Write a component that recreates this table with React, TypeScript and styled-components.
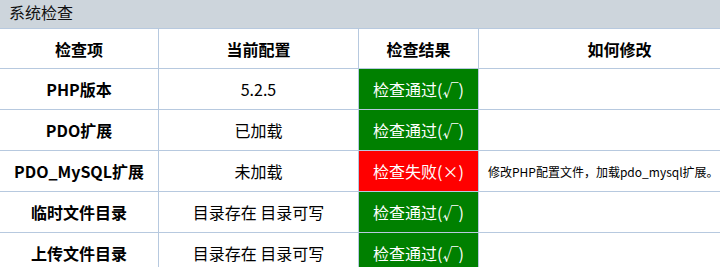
import React from "react";
import styled, {createGlobalStyle, css} from "styled-components";

const GlobalStyle = createGlobalStyle`
  html, body {
    margin: 0;
    padding: 0;
    background: #fff;
    overflow: hidden;
  }
  body {
    font-family: "Noto Sans CJK SC", "Liberation Sans", sans-serif;
    color: #000;
  }
`;

type Status = "pass" | "fail";

const rows: { item: string, current: string, status: Status, fix: string }[] = [
    {item: "PHP版本", current: "5.2.5", status: "pass", fix: ""},
    {item: "PDO扩展", current: "已加载", status: "pass", fix: ""},
    {item: "PDO_MySQL扩展", current: "未加载", status: "fail", fix: "修改PHP配置文件，加载pdo_mysql扩展。"},
    {item: "临时文件目录", current: "目录存在 目录可写", status: "pass", fix: ""},
    {item: "上传文件目录", current: "目录存在 目录可写", status: "pass", fix: ""},
];

export default function App() {
    return (
        <>
            <GlobalStyle/>
            <Panel>
                <TitleBar>系统检查</TitleBar>
                <Table>
                    <colgroup>
                        <col style={{width: 159}}/>
                        <col style={{width: 200}}/>
                        <col style={{width: 120}}/>
                        <col/>
                    </colgroup>
                    <thead>
                    <tr>
                        <HeadCell>检查项</HeadCell>
                        <HeadCell>当前配置</HeadCell>
                        <HeadCell>检查结果</HeadCell>
                        <HeadCell>如何修改</HeadCell>
                    </tr>
                    </thead>
                    <tbody>
                    {rows.map((r) => (
                        <tr key={r.item}>
                            <ItemCell>{r.item}</ItemCell>
                            <ValueCell>{r.current}</ValueCell>
                            <ResultCell status={r.status}>
                                {r.status === "pass" ? "检查通过(√)" : "检查失败(×)"}
                            </ResultCell>
                            <FixCell>{r.fix}</FixCell>
                        </tr>
                    ))}
                    </tbody>
                </Table>
            </Panel>
        </>
    );
}

const Panel = styled.div`
  width: 720px;
  height: 267px;
  overflow: hidden;
`;

const TitleBar = styled.div`
  height: 28px;
  line-height: 24px;
  padding-left: 9px;
  background: #cdd5dc;
  font-size: 16px;
  color: #111;
`;

const Table = styled.table`
  border-collapse: collapse;
  table-layout: fixed;
  width: 762px;
  margin-left: -1px;
`;

const cellBase = css`
  border: 1px solid #b7c9df;
  height: 40px;
  padding: 0;
  text-align: center;
  vertical-align: middle;
  font-size: 16px;
`;

const HeadCell = styled.th`
  ${cellBase};
  height: 39px;
  font-weight: bold;
`;

const ItemCell = styled.td`
  ${cellBase};
  font-weight: bold;
`;

const ValueCell = styled.td`
  ${cellBase};
`;

const ResultCell = styled.td<{ status: Status }>`
  ${cellBase};
  color: #fff;
  background: ${({status}) => status === "pass" ? "#008000" : "#ff0000"};
`;

const FixCell = styled.td`
  ${cellBase};
  text-align: left;
  padding-left: 9px;
  font-size: 12px;
`;
